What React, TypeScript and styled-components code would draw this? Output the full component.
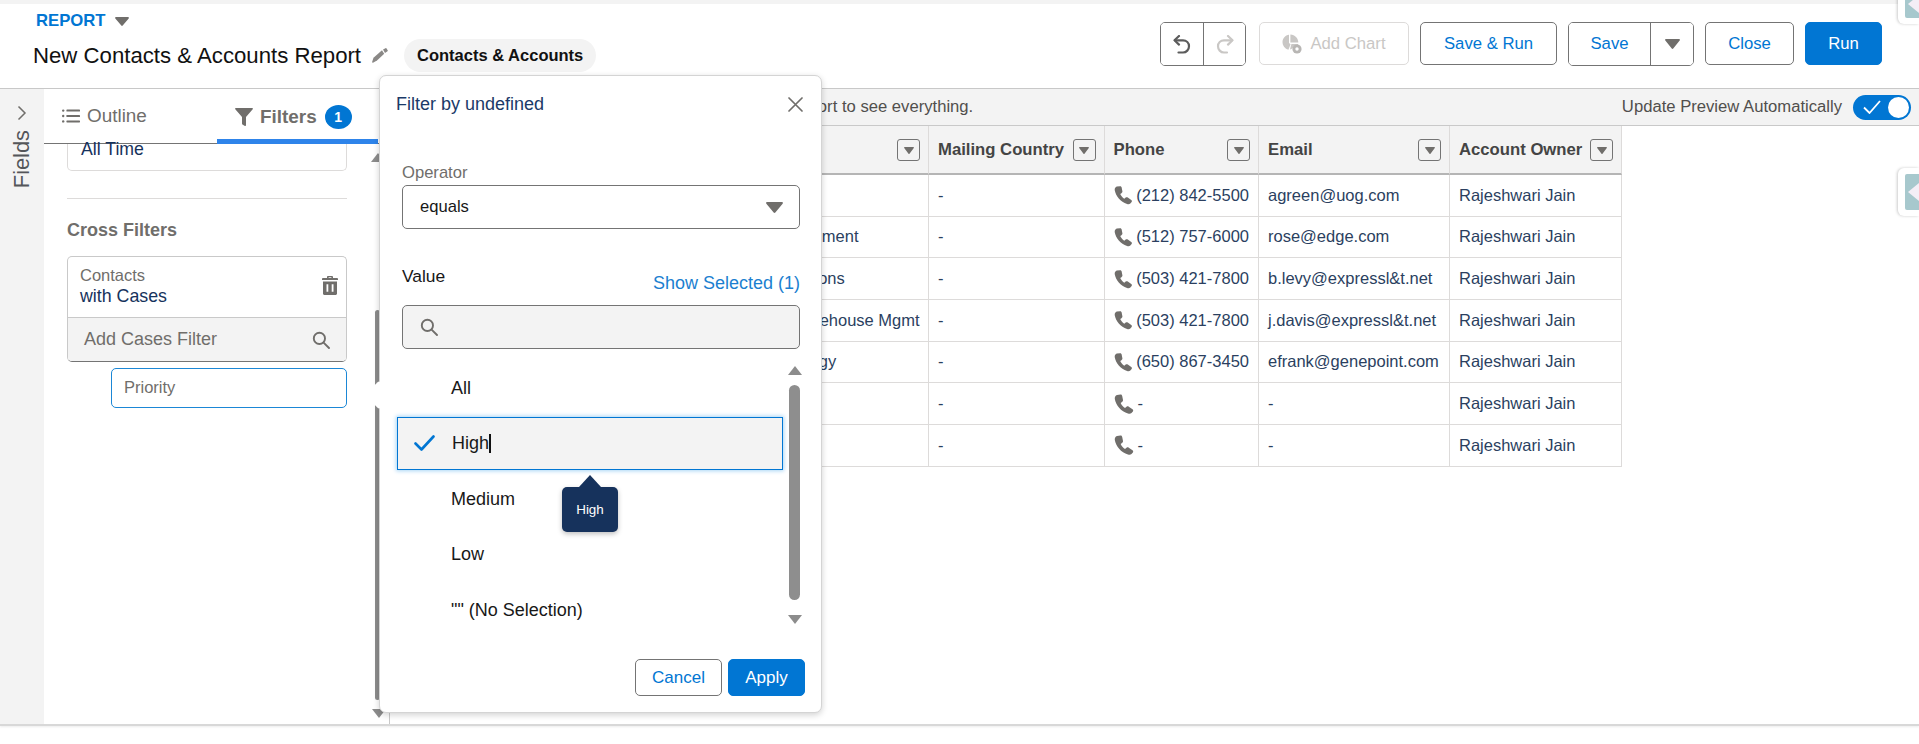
import React from "react";
import styled, { createGlobalStyle } from "styled-components";

const GlobalStyle = createGlobalStyle`
  html, body {
    margin: 0;
    padding: 0;
    background: #fff;
    font-family: "Liberation Sans", Arial, sans-serif;
  }
  * {
    box-sizing: border-box;
  }
`;

const navy = "#16325c";
const blue = "#0176d3";
const iconGray = "#706e6b";
const line = "#dddbda";

const Page = styled.div`
  position: relative;
  width: 1919px;
  height: 744px;
  overflow: hidden;
  background: #fff;
`;

const TopStrip = styled.div`
  height: 4px;
  background: #f3f3f3;
`;

const Header = styled.header`
  height: 85px;
  display: flex;
  justify-content: space-between;
  align-items: flex-start;
  padding: 18px 37px 0 33px;
  border-bottom: 1px solid #c9c9c9;
`;

const TitleBlock = styled.div`
  display: flex;
  flex-direction: column;
  margin-top: -11px;
`;

const ReportRow = styled.div`
  display: flex;
  align-items: center;
  gap: 9px;
  height: 20px;
  padding-left: 3px;
  color: ${blue};
  font-size: 16.7px;
  font-weight: 700;
`;

const TitleRow = styled.div`
  display: flex;
  align-items: center;
  height: 33px;
  margin-top: 8px;
  font-size: 22.2px;
  color: #111;
`;

const Pill = styled.span`
  display: inline-flex;
  align-items: center;
  height: 33px;
  padding: 0 13px;
  margin-left: 16px;
  border-radius: 17px;
  background: #f3f3f3;
  font-size: 16.5px;
  font-weight: 700;
`;

const PencilWrap = styled.span`
  display: inline-flex;
  margin-left: 11px;
`;

const Toolbar = styled.div`
  display: flex;
  align-items: flex-start;
  gap: 11px;
`;

const Btn = styled.button<{ $w: number; $primary?: boolean; $off?: boolean }>`
  width: ${(p) => p.$w}px;
  height: 43px;
  display: inline-flex;
  align-items: center;
  justify-content: center;
  gap: 8px;
  padding: 0;
  border-radius: 5px;
  border: 1px solid ${(p) => (p.$primary ? blue : p.$off ? line : "#747474")};
  background: ${(p) => (p.$primary ? blue : "#fff")};
  color: ${(p) => (p.$primary ? "#fff" : p.$off ? "#c9c7c5" : blue)};
  font-family: inherit;
  font-size: 16.7px;
`;

const Group = styled.div<{ $w: number; $gapRight?: number }>`
  width: ${(p) => p.$w}px;
  height: 44px;
  margin-right: ${(p) => p.$gapRight ?? 0}px;
  display: flex;
  border: 1px solid #747474;
  border-radius: 5px;
  overflow: hidden;
  background: #fff;
`;

const GroupPart = styled.button<{ $w?: number; $off?: boolean }>`
  flex: ${(p) => (p.$w ? `0 0 ${p.$w}px` : "1")};
  display: inline-flex;
  align-items: center;
  justify-content: center;
  padding: 0;
  border: 0;
  background: #fff;
  color: ${blue};
  font-family: inherit;
  font-size: 16.7px;
  & + & {
    border-left: 1px solid ${(p) => (p.$off ? line : "#747474")};
  }
`;

const Body = styled.div`
  display: flex;
  height: 637px;
  border-bottom: 2px solid #d8d8d8;
  box-shadow: 0 1px 2px rgba(0, 0, 0, 0.08);
`;

const FieldsStrip = styled.div`
  width: 44px;
  flex: none;
  background: #f3f3f3;
  display: flex;
  flex-direction: column;
  align-items: center;
  padding-top: 16px;
  color: ${iconGray};
`;

const FieldsLabel = styled.span`
  writing-mode: vertical-rl;
  transform: rotate(180deg);
  margin-top: 9px;
  font-size: 21.8px;
  line-height: 24px;
  color: #54565a;
`;

const FilterPanel = styled.aside`
  position: relative;
  width: 346px;
  flex: none;
  border-right: 1px solid #c9c9c9;
  display: flex;
  flex-direction: column;
`;

const Tabs = styled.div`
  height: 55px;
  display: flex;
  border-bottom: 1px solid #747474;
`;

const Tab = styled.div<{ $active?: boolean; $w: number }>`
  width: ${(p) => p.$w}px;
  height: ${(p) => (p.$active ? "55px" : "54px")};
  display: flex;
  align-items: center;
  padding-left: 18px;
  gap: 7px;
  font-size: 18.9px;
  font-weight: ${(p) => (p.$active ? 700 : 400)};
  color: ${iconGray};
  border-bottom: ${(p) => (p.$active ? "5px solid #2e84ea" : "0")};
  padding-top: ${(p) => (p.$active ? "5px" : "0")};
`;

const Badge = styled.span`
  width: 27px;
  height: 24px;
  margin-left: 1px;
  border-radius: 50%;
  background: ${blue};
  color: #fff;
  font-size: 14px;
  font-weight: 700;
  display: inline-flex;
  align-items: center;
  justify-content: center;
`;

const PanelBody = styled.div`
  position: relative;
  padding: 0 42px 0 23px;
`;

const ClippedCard = styled.div`
  height: 27px;
  padding-left: 13px;
  border: 1px solid ${line};
  border-top: 0;
  border-radius: 0 0 5px 5px;
  color: ${navy};
  font-size: 17.7px;
  line-height: 11px;
`;

const Divider = styled.hr`
  margin: 27px 0 0;
  border: 0;
  border-top: 1px solid ${line};
`;

const SectionTitle = styled.h3`
  margin: 21px 0 0;
  height: 20px;
  line-height: 20px;
  color: ${iconGray};
  font-size: 18px;
  font-weight: 700;
`;

const CrossCard = styled.div`
  margin-top: 16px;
  border: 1px solid #c9c9c9;
  border-bottom-color: #747474;
  border-radius: 5px;
  overflow: hidden;
`;

const CrossHead = styled.div`
  height: 60px;
  display: flex;
  align-items: center;
  justify-content: space-between;
  padding: 0 8px 3px 12px;
  font-size: 17.8px;
  color: ${navy};
`;

const CrossHeadText = styled.div`
  display: flex;
  flex-direction: column;
  line-height: 21px;
`;

const MutedSmall = styled.span`
  color: ${iconGray};
  font-size: 16.5px;
`;

const AddFilter = styled.div`
  height: 44px;
  display: flex;
  align-items: center;
  justify-content: space-between;
  padding: 0 16px;
  background: #f3f3f3;
  border-top: 1px solid #c9c9c9;
  color: ${iconGray};
  font-size: 18px;
`;

const PriorityBox = styled.div`
  margin: 6px 0 0 44px;
  height: 40px;
  display: flex;
  align-items: center;
  padding: 0 12px 2px;
  border: 1px solid #1b87d6;
  border-radius: 5px;
  color: ${iconGray};
  font-size: 16.5px;
`;

const PanelScroll = styled.div`
  position: absolute;
  top: 221px;
  left: 331px;
  width: 5px;
  height: 390px;
  border-radius: 3px;
  background: #8c8c8c;
`;

const ScrollTriangle = styled.span<{ $down?: boolean; $x: number; $y: number }>`
  position: absolute;
  left: ${(p) => p.$x}px;
  top: ${(p) => p.$y}px;
  width: 0;
  height: 0;
  border-left: 7px solid transparent;
  border-right: 7px solid transparent;
  ${(p) =>
    p.$down
      ? "border-top: 9px solid #8c8c8c;"
      : "border-bottom: 9px solid #8c8c8c;"}
`;

const Preview = styled.main`
  flex: 1;
  min-width: 0;
`;

const StatusBar = styled.div`
  height: 37px;
  display: flex;
  align-items: center;
  justify-content: space-between;
  padding: 0 8px 0 44px;
  background: #f3f3f3;
  border-bottom: 1px solid #c9c9c9;
  font-size: 16.65px;
  color: #514f4d;
`;

const AutoUpdate = styled.div`
  display: flex;
  align-items: center;
  gap: 11px;
`;

const Toggle = styled.span`
  width: 58px;
  height: 25px;
  padding: 0 2px 0 10px;
  border-radius: 13px;
  background: ${blue};
  display: flex;
  align-items: center;
  justify-content: space-between;
`;

const ToggleKnob = styled.span`
  width: 21px;
  height: 21px;
  border-radius: 50%;
  background: #fff;
`;

const Table = styled.div`
  width: 1232px;
  display: grid;
  grid-template-columns: 325px 214px 175.5px 154.5px 191px 172px;
  grid-template-rows: 49px repeat(7, 41.67px);
  font-size: 16.5px;
  color: #2b3f5f;
`;

const HeadCell = styled.div`
  display: flex;
  align-items: center;
  justify-content: space-between;
  padding: 1px 8px 0 9px;
  background: #f3f3f3;
  border-right: 1px solid ${line};
  border-bottom: 2px solid #b5b5b5;
  font-size: 16.7px;
  font-weight: 700;
  color: #444;
  white-space: nowrap;
`;

const SortBox = styled.span`
  width: 23px;
  height: 22px;
  flex: none;
  display: inline-flex;
  align-items: center;
  justify-content: center;
  background: #f3f3f3;
  border: 1px solid #747474;
  border-radius: 3px;
`;

const Cell = styled.div`
  display: flex;
  align-items: center;
  gap: 4px;
  padding: 0 9px;
  border-right: 1px solid ${line};
  border-bottom: 1px solid ${line};
  white-space: nowrap;
  overflow: hidden;
`;

const Popover = styled.section`
  position: absolute;
  left: 379px;
  top: 75px;
  width: 443px;
  height: 638px;
  padding: 0 17px;
  background: #fff;
  border: 1px solid #d4d4d4;
  border-radius: 7px;
  box-shadow: 0 2px 6px rgba(0, 0, 0, 0.18);
  display: flex;
  flex-direction: column;
`;

const Notch = styled.span`
  position: absolute;
  left: -11px;
  top: 309px;
  width: 20px;
  height: 20px;
  background: #fff;
  transform: rotate(45deg);
  border-radius: 2px;
`;

const PopHead = styled.div`
  height: 56px;
  display: flex;
  align-items: center;
  justify-content: space-between;
  margin-left: -1px;
  padding-right: 1px;
  color: #1b3a68;
  font-size: 18px;
`;

const FieldLabel = styled.div`
  margin-top: 31px;
  height: 20px;
  line-height: 20px;
  padding-left: 5px;
  color: ${iconGray};
  font-size: 16.6px;
`;

const SelectBox = styled.div`
  margin: 2px 4px 0 5px;
  height: 44px;
  display: flex;
  align-items: center;
  justify-content: space-between;
  padding: 0 16px 0 17px;
  border: 1px solid #747474;
  border-radius: 5px;
  color: #181818;
  font-size: 16.6px;
`;

const ValueRow = styled.div`
  margin: 37px 4px 0 5px;
  height: 34px;
  display: flex;
  justify-content: space-between;
  align-items: flex-start;
  font-size: 17.4px;
  color: #181818;
`;

const ShowSelected = styled.span`
  margin-top: 7px;
  color: #1b7fd0;
  font-size: 18px;
`;

const SearchBox = styled.div`
  margin: 5px 4px 0 5px;
  height: 44px;
  display: flex;
  align-items: center;
  padding-left: 17px;
  background: #f3f3f3;
  border: 1px solid #747474;
  border-radius: 5px;
`;

const ListArea = styled.div`
  position: relative;
  margin-top: 12px;
  height: 290px;
`;

const OptionList = styled.ul`
  list-style: none;
  margin: 0;
  padding: 0;
  width: 386px;
`;

const Option = styled.li<{ $selected?: boolean }>`
  height: ${(p) => (p.$selected ? "53px" : "55.5px")};
  display: flex;
  align-items: center;
  padding-left: 54px;
  position: relative;
  font-size: 18px;
  color: #181818;
  ${(p) =>
    p.$selected &&
    `
    margin: 0.5px 0 1.5px;
    background: #f3f3f3;
    border: 1px solid ${blue};
    box-shadow: 0 0 4px 1px #a8d5f5;
  `}
`;

const Caret = styled.span`
  width: 1.5px;
  height: 19px;
  background: #111;
`;

const CheckWrap = styled.span`
  position: absolute;
  left: 16px;
  top: 17px;
  display: inline-flex;
`;

const Tip = styled.div`
  position: absolute;
  left: 165px;
  top: 126px;
  width: 56px;
  height: 45px;
  display: flex;
  align-items: center;
  justify-content: center;
  background: ${navy};
  border-radius: 5px;
  box-shadow: 0 2px 5px rgba(0, 0, 0, 0.25);
  color: #fff;
  font-size: 13.4px;
  &::before {
    content: "";
    position: absolute;
    left: 17px;
    top: -12px;
    border-left: 11px solid transparent;
    border-right: 11px solid transparent;
    border-bottom: 12px solid ${navy};
  }
`;

const ListThumb = styled.span`
  position: absolute;
  left: 392px;
  top: 24px;
  width: 11px;
  height: 215px;
  border-radius: 6px;
  background: #8e8e8e;
`;

const PopFooter = styled.div`
  display: flex;
  justify-content: flex-end;
  gap: 6px;
  margin-right: -1px;
  margin-top: 8px;
`;

const FooterBtn = styled.button<{ $primary?: boolean; $w: number }>`
  width: ${(p) => p.$w}px;
  height: 37px;
  padding: 0;
  border-radius: 5px;
  border: 1px solid ${(p) => (p.$primary ? blue : "#747474")};
  background: ${(p) => (p.$primary ? blue : "#fff")};
  color: ${(p) => (p.$primary ? "#fff" : blue)};
  font-family: inherit;
  font-size: 17px;
`;

const SideTab = styled.div<{ $top: number; $h: number }>`
  position: absolute;
  left: 1898px;
  top: ${(p) => p.$top}px;
  width: 21px;
  height: ${(p) => p.$h}px;
  padding: 6px 0 6px 7px;
  background: #fff;
  border-radius: 6px 0 0 6px;
  box-shadow: -1px 0 3px rgba(0, 0, 0, 0.2);
  overflow: hidden;
`;

const SideTabFace = styled.span`
  position: relative;
  display: block;
  height: 100%;
  background: #a7c8cd;
  border-radius: 2px 0 0 2px;
  &::after {
    content: "";
    position: absolute;
    left: 3px;
    top: 50%;
    margin-top: -9px;
    border-top: 9px solid transparent;
    border-bottom: 9px solid transparent;
    border-right: 11px solid #f4eef6;
  }
`;

const Triangle = ({ w = 14, h = 9, color = iconGray }: { w?: number; h?: number; color?: string }) => (
  <svg width={w} height={h} viewBox="0 0 14 9" preserveAspectRatio="none">
    <path d="M1 0h12c.8 0 1.200.8.700 1.400L7.700 8.600c-.4.500-1 .500-1.400 0L.3 1.400C-.2.800.2 0 1 0z" fill={color} />
  </svg>
);

const SearchIcon = ({ size = 18 }: { size?: number }) => (
  <svg width={size} height={size} viewBox="0 0 18 18" fill="none" stroke={iconGray} strokeWidth="1.900">
    <circle cx="7.400" cy="7.400" r="5.600" />
    <path d="M11.600 11.600l5.400 5.400" strokeLinecap="round" />
  </svg>
);

const PhoneIcon = () => (
  <svg width="20" height="20" viewBox="0 0 20 20">
    <path
      d="M3 1 6.500.5C7.500.4 8 1 8.200 2L9 6C9.100 7 8.600 7.500 8 8L6.700 9C7.500 11 9 12.800 11 14L12.500 12.800C13.200 12.200 14 12.200 14.800 12.700L18.500 15.300C19.300 16 19.400 16.700 18.900 17.400L17.500 19C16.700 19.800 15.500 20 14 19.600 7 17.500 1.800 11 .8 5 .5 3.200 1.500 1.500 3 1Z"
      fill={iconGray}
    />
  </svg>
);

const UndoIcon = ({ color }: { color: string }) => (
  <svg width="18" height="19" viewBox="0 0 18 19" fill="none" stroke={color} strokeWidth="2.200" strokeLinecap="round" strokeLinejoin="round">
    <path d="M6 1 1.500 5.300 6 9.600" />
    <path d="M2 5.300h8c3.400 0 6 2.500 6 5.900s-2.600 6.300-6 6.300H5.500" />
  </svg>
);

const RedoIcon = ({ color }: { color: string }) => (
  <svg width="18" height="19" viewBox="0 0 18 19" fill="none" stroke={color} strokeWidth="2.200" strokeLinecap="round" strokeLinejoin="round">
    <path d="M12 1l4.500 4.300L12 9.600" />
    <path d="M16 5.300H8c-3.400 0-6 2.500-6 5.900s2.600 6.300 6 6.300h3" />
  </svg>
);

const ChartIcon = () => (
  <svg width="20" height="20" viewBox="0 0 20 20">
    <path d="M8.400.6v7.900h7.900C16 4 13 .9 8.400.6z" fill="#c9c7c5" />
    <path d="M7 .7C3.300 1.200.5 4.300.5 8c0 3.700 2.500 6.800 5.900 7.700l2.200-5.400L7 9z" fill="#c9c7c5" />
    <path d="M9.400 10h6.800c-.1.500-.3 1-.5 1.400-2.100-.3-4 .6-5 2.600-1 .9-1.700 1.200-2.700 1.500z" fill="#c9c7c5" />
    <circle cx="15" cy="15" r="4.600" fill="#b8b6b4" />
    <circle cx="15" cy="15" r="1.700" fill="#fff" />
  </svg>
);

const ListIcon = () => (
  <svg width="18" height="14" viewBox="0 0 18 14" fill={iconGray}>
    <circle cx="1.200" cy="1.600" r="1.200" />
    <circle cx="1.200" cy="7" r="1.200" />
    <circle cx="1.200" cy="12.400" r="1.200" />
    <rect x="4.400" y="0.600" width="13.600" height="2" rx="0.600" />
    <rect x="4.400" y="6" width="13.600" height="2" rx="0.600" />
    <rect x="4.400" y="11.400" width="13.600" height="2" rx="0.600" />
  </svg>
);

const FunnelIcon = () => (
  <svg width="18" height="18" viewBox="0 0 18 18">
    <path d="M.8 0h16.400c.6 0 1 .7.500 1.200L11 9v8.200c0 .6-.6 1-1.100.7l-2.500-1.500c-.3-.2-.4-.5-.4-.8V9L.3 1.200C-.2.700.2 0 .8 0z" fill={iconGray} />
  </svg>
);

const PencilIcon = () => (
  <svg width="16" height="15" viewBox="0 0 16 15" fill="#8a8886">
    <path d="M11 1.600 13.500.2c.4-.2.8-.1 1 .2l1.200 1.900c.2.400.1.800-.2 1L13 5z" />
    <path d="M10 2.300 12.200 5.800 5 12.500 1 14.800c-.5.200-1-.2-.9-.7L1.500 9.700z" />
  </svg>
);

const TrashIcon = () => (
  <svg width="16" height="19" viewBox="0 0 16 19" fill={iconGray}>
    <path d="M6 0h4c.5 0 1 .5 1 1v1h4c.5 0 1 .5 1 1v1H0V3c0-.5.5-1 1-1h4V1c0-.5.5-1 1-1zm.6 1.200V2h2.800v-.8z" />
    <path d="M1 5.500h14v12c0 .8-.7 1.500-1.500 1.500h-11C1.700 19 1 18.300 1 17.500zm3.500 2.700v7.600h1.800V8.200zm5.200 0v7.600h1.800V8.200z" />
  </svg>
);

const columns = ["Mailing Country", "Phone", "Email", "Account Owner"];

const rows = [
  ["CFO", "-", "(212) 842-5500", "agreen@uog.com"],
  ["SVP, Procurement", "-", "(512) 757-6000", "rose@edge.com"],
  ["SVP, Operations", "-", "(503) 421-7800", "b.levy@expressl&t.net"],
  ["Director, Warehouse Mgmt", "-", "(503) 421-7800", "j.davis@expressl&t.net"],
  ["VP, Technology", "-", "(650) 867-3450", "efrank@genepoint.com"],
  ["", "-", "-", "-"],
  ["", "-", "-", "-"],
];

const App = () => {
  return (
    <Page>
      <GlobalStyle />
      <TopStrip />
      <Header>
        <TitleBlock>
          <ReportRow>
            REPORT
            <Triangle w={14} h={9} />
          </ReportRow>
          <TitleRow>
            New Contacts &amp; Accounts Report
            <PencilWrap>
              <PencilIcon />
            </PencilWrap>
            <Pill>Contacts &amp; Accounts</Pill>
          </TitleRow>
        </TitleBlock>
        <Toolbar>
          <Group $w={86} $gapRight={2}>
            <GroupPart $w={42}>
              <UndoIcon color="#5c5c5c" />
            </GroupPart>
            <GroupPart $off>
              <RedoIcon color="#c9c7c5" />
            </GroupPart>
          </Group>
          <Btn $w={150} $off>
            <ChartIcon />
            Add Chart
          </Btn>
          <Btn $w={137}>Save &amp; Run</Btn>
          <Group $w={126}>
            <GroupPart>Save</GroupPart>
            <GroupPart $w={43}>
              <Triangle w={15} h={10} />
            </GroupPart>
          </Group>
          <Btn $w={89}>Close</Btn>
          <Btn $w={77} $primary>
            Run
          </Btn>
        </Toolbar>
      </Header>

      <Body>
        <FieldsStrip>
          <svg width="10" height="16" viewBox="0 0 10 16" fill="none" stroke="#706e6b" strokeWidth="1.500">
            <path d="M1.500 1.500 8 8l-6.500 6.500" />
          </svg>
          <FieldsLabel>Fields</FieldsLabel>
        </FieldsStrip>

        <FilterPanel>
          <Tabs>
            <Tab $w={173}>
              <ListIcon />
              Outline
            </Tab>
            <Tab $w={161} $active>
              <FunnelIcon />
              Filters
              <Badge>1</Badge>
            </Tab>
          </Tabs>
          <PanelBody>
            <ClippedCard>All Time</ClippedCard>
            <Divider />
            <SectionTitle>Cross Filters</SectionTitle>
            <CrossCard>
              <CrossHead>
                <CrossHeadText>
                  <MutedSmall>Contacts</MutedSmall>
                  with Cases
                </CrossHeadText>
                <TrashIcon />
              </CrossHead>
              <AddFilter>
                Add Cases Filter
                <SearchIcon />
              </AddFilter>
            </CrossCard>
            <PriorityBox>Priority</PriorityBox>
          </PanelBody>
          <ScrollTriangle $x={327} $y={64} />
          <PanelScroll />
          <ScrollTriangle $down $x={328} $y={620} />
        </FilterPanel>

        <Preview>
          <StatusBar>
            <span>Previewing a limited number of records. Run the report to see everything.</span>
            <AutoUpdate>
              Update Preview Automatically
              <Toggle>
                <svg width="18" height="14" viewBox="0 0 18 14" fill="none" stroke="#fff" strokeWidth="1.800">
                  <path d="M1 7.500 6.500 13 17 1" />
                </svg>
                <ToggleKnob />
              </Toggle>
            </AutoUpdate>
          </StatusBar>
          <Table>
            <HeadCell />
            <HeadCell>
              Title
              <SortBox>
                <Triangle w={10} h={7} />
              </SortBox>
            </HeadCell>
            {columns.map((name) => (
              <HeadCell key={name}>
                {name}
                <SortBox>
                  <Triangle w={10} h={7} />
                </SortBox>
              </HeadCell>
            ))}
            {rows.map((row, i) => (
              <React.Fragment key={i}>
                <Cell />
                {row.map((value, j) => (
                  <Cell key={j}>
                    {j === 2 && <PhoneIcon />}
                    {value}
                  </Cell>
                ))}
                <Cell>Rajeshwari Jain</Cell>
              </React.Fragment>
            ))}
          </Table>
        </Preview>
      </Body>

      <Popover>
        <Notch />
        <PopHead>
          Filter by undefined
          <svg width="15" height="15" viewBox="0 0 15 15" stroke="#706e6b" strokeWidth="1.700" strokeLinecap="round">
            <path d="M1 1l13 13M14 1 1 14" />
          </svg>
        </PopHead>
        <FieldLabel>Operator</FieldLabel>
        <SelectBox>
          equals
          <Triangle w={17} h={11} />
        </SelectBox>
        <ValueRow>
          Value
          <ShowSelected>Show Selected (1)</ShowSelected>
        </ValueRow>
        <SearchBox>
          <SearchIcon />
        </SearchBox>
        <ListArea>
          <OptionList>
            <Option>All</Option>
            <Option $selected>
              <CheckWrap>
                <svg width="21" height="16" viewBox="0 0 21 16" fill="none" stroke="#0176d3" strokeWidth="2.600" strokeLinecap="round" strokeLinejoin="round">
                  <path d="M1.500 8.500 7.500 14.500 19.500 1.500" />
                </svg>
              </CheckWrap>
              High
              <Caret />
            </Option>
            <Option>Medium</Option>
            <Option>Low</Option>
            <Option>&quot;&quot; (No Selection)</Option>
          </OptionList>
          <ScrollTriangle $x={391} $y={5} />
          <ListThumb />
          <ScrollTriangle $down $x={391} $y={254} />
          <Tip>High</Tip>
        </ListArea>
        <PopFooter>
          <FooterBtn $w={87}>Cancel</FooterBtn>
          <FooterBtn $w={77} $primary>
            Apply
          </FooterBtn>
        </PopFooter>
      </Popover>

      <SideTab $top={-16} $h={40}>
        <SideTabFace />
      </SideTab>
      <SideTab $top={168} $h={48}>
        <SideTabFace />
      </SideTab>
    </Page>
  );
};

export default App;
